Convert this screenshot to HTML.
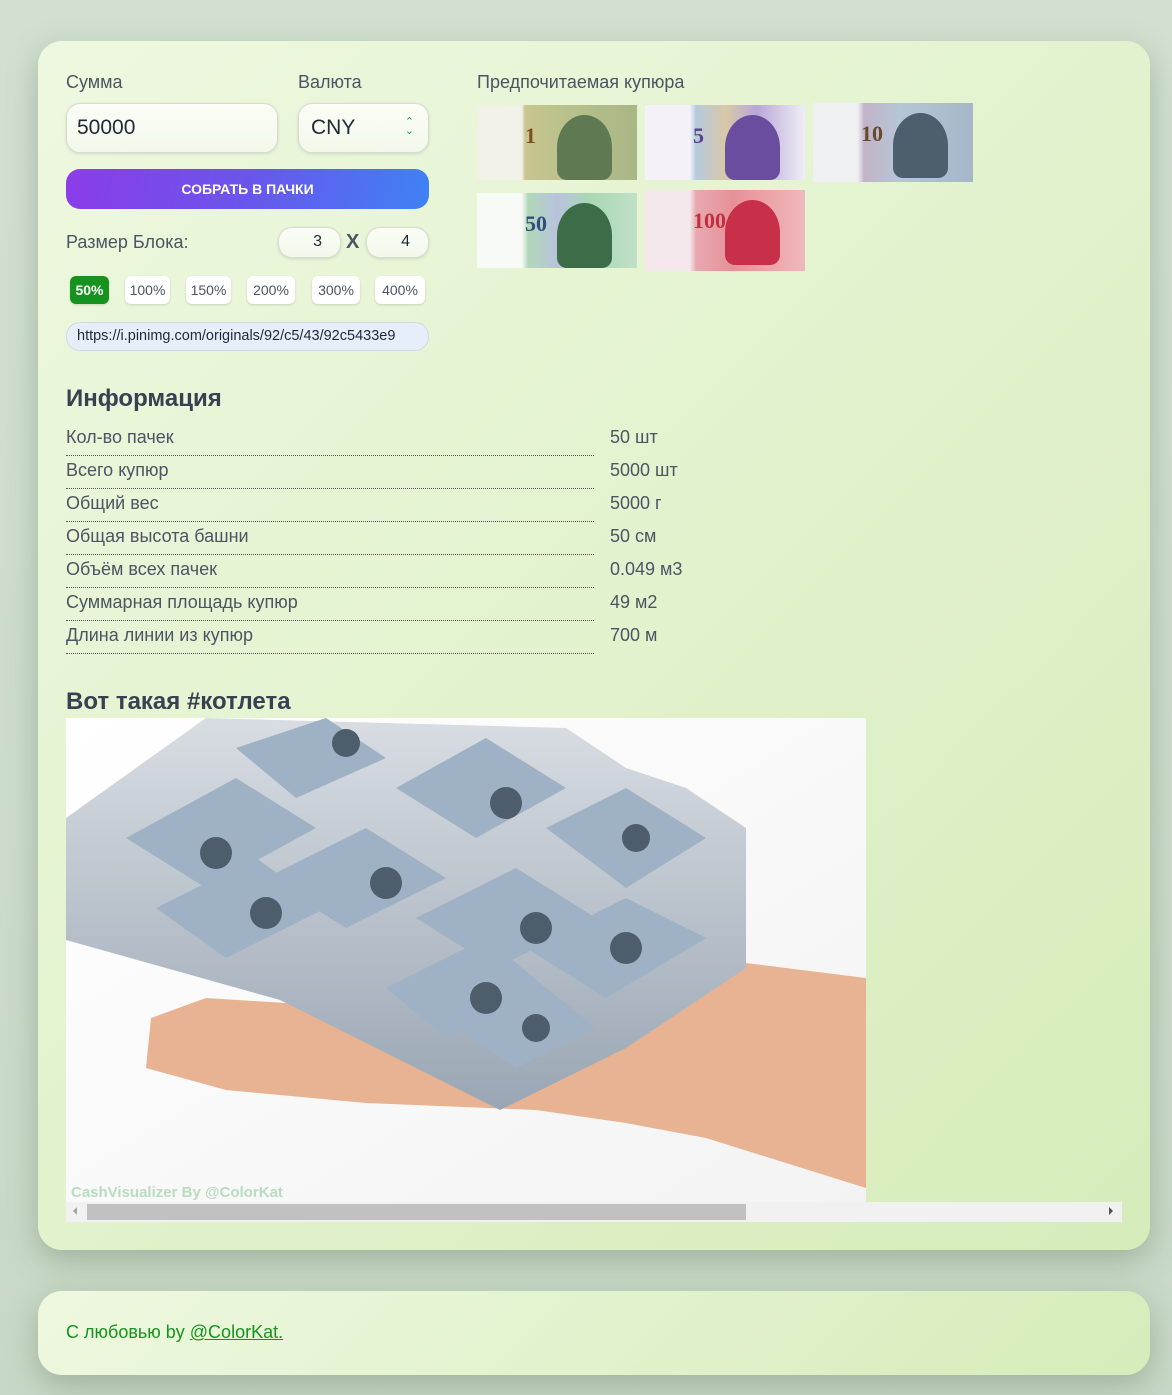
<!DOCTYPE html>
<html><head><meta charset="utf-8"><style>
*{box-sizing:border-box;margin:0;padding:0}
body{width:1172px;height:1395px;background:linear-gradient(180deg,#d2e0d0,#c8d8c6);font-family:"Liberation Sans",sans-serif;position:relative;overflow:hidden;color:#374151}
.card{position:absolute;left:38px;width:1112px;border-radius:24px;background:linear-gradient(135deg,#eef8e0,#d6ecba);box-shadow:0 10px 30px rgba(80,110,80,.35)}
.a{position:absolute}
.lbl{font-size:18px;color:#4b5563}
.inp{position:absolute;background:linear-gradient(#fbfdf6,#f2f8ea);border:1px solid #d6dccf;border-radius:14px;box-shadow:0 1px 3px rgba(0,0,0,.12);font-size:21px;color:#1f2937}
.pct{position:absolute;top:276px;height:28px;background:#fff;border-radius:6px;box-shadow:0 1px 2px rgba(0,0,0,.15);font-size:14px;color:#4b5563;text-align:center;line-height:28px}
.row{position:absolute;left:66px;width:528px;height:33px;border-bottom:1px dotted #555;font-size:18px;color:#4b5563;padding-top:4px}
.val{position:absolute;left:610px;font-size:18px;color:#4b5563}
.note{position:absolute;width:160px;height:75px;overflow:hidden}
.note .port{position:absolute;right:25px;top:10px;width:55px;height:65px;border-radius:50% 50% 10px 10px}
.note .num{position:absolute;left:48px;top:18px;font:bold 22px "Liberation Serif",serif}
</style></head><body>
<div class="card" style="top:41px;height:1209px"></div>
<div class="card" style="top:1291px;height:84px"></div>

<div class="a lbl" style="left:66px;top:72px">Сумма</div>
<div class="a lbl" style="left:298px;top:72px">Валюта</div>
<div class="inp" style="left:66px;top:103px;width:212px;height:50px;padding:12px 10px">50000</div>
<div class="inp" style="left:298px;top:103px;width:131px;height:50px;padding:12px 12px">CNY<span style="position:absolute;right:14px;top:14px;font-size:11px;color:#16a34a;line-height:9px">⌃<br>⌄</span></div>
<div class="a" style="left:66px;top:169px;width:363px;height:40px;border-radius:14px;background:linear-gradient(100deg,#8b3ce8,#6a55ec 50%,#3f82f4);color:#fff;font-weight:bold;font-size:14px;text-align:center;line-height:40px">СОБРАТЬ В ПАЧКИ</div>
<div class="a lbl" style="left:66px;top:232px">Размер Блока:</div>
<div class="inp" style="left:278px;top:227px;width:63px;height:31px;font-size:16px;text-align:right;padding:5px 18px">3</div>
<div class="a" style="left:346px;top:231px;font-size:20px;font-weight:bold;color:#4b5563">X</div>
<div class="inp" style="left:366px;top:227px;width:63px;height:31px;font-size:16px;text-align:right;padding:5px 18px">4</div>
<div class="pct" style="left:70px;width:39px;background:#16931f;color:#fff;font-weight:bold">50%</div>
<div class="pct" style="left:125px;width:45px">100%</div>
<div class="pct" style="left:186px;width:45px">150%</div>
<div class="pct" style="left:247px;width:48px">200%</div>
<div class="pct" style="left:312px;width:48px">300%</div>
<div class="pct" style="left:375px;width:50px">400%</div>
<div class="a" style="left:66px;top:322px;width:363px;height:29px;border-radius:14px;background:#e6eefb;border:1px solid #d0d8e6;font-size:14.5px;color:#1f2937;padding:5px 10px;white-space:nowrap;overflow:hidden">https://i.pinimg.com/originals/92/c5/43/92c5433e9</div>

<div class="a lbl" style="left:477px;top:72px">Предпочитаемая купюра</div>
<div class="note" style="left:477px;top:105px;background:linear-gradient(90deg,#f1f1ea 28%,#c9c690 30%,#b6c08a 60%,#a9b786)"><div class="port" style="background:#5f7a52"></div><div class="num" style="color:#7a5020">1</div></div>
<div class="note" style="left:645px;top:105px;background:linear-gradient(90deg,#f4f2f8 28%,#b4cadb 32%,#d8c8a8 50%,#b9a8d8 70%,#f0eef8)"><div class="port" style="background:#6a4d9e"></div><div class="num" style="color:#5e3f8c">5</div></div>
<div class="note" style="left:813px;top:103px;height:79px;background:linear-gradient(90deg,#eef0f2 28%,#c3b3c8 32%,#b5c7d6 55%,#a5b7c8)"><div class="port" style="background:#4d5e6c"></div><div class="num" style="color:#6a4a2a">10</div></div>
<div class="note" style="left:477px;top:193px;background:linear-gradient(90deg,#f8faf6 28%,#b0d8b8 32%,#b9c2de 50%,#a8d8b4 70%,#c0e0c8)"><div class="port" style="background:#3d6d48"></div><div class="num" style="color:#2f4f7a">50</div></div>
<div class="note" style="left:645px;top:190px;height:81px;background:linear-gradient(90deg,#f4e8ec 28%,#e8a8b0 32%,#e89098 55%,#f0b8bc)"><div class="port" style="background:#c8304a"></div><div class="num" style="color:#c03040">100</div></div>

<div class="a" style="left:66px;top:385px;font-size:24px;font-weight:bold;color:#374151">Информация</div>
<div class="row" style="top:423px">Кол-во пачек</div><div class="val" style="top:427px">50 шт</div>
<div class="row" style="top:456px">Всего купюр</div><div class="val" style="top:460px">5000 шт</div>
<div class="row" style="top:489px">Общий вес</div><div class="val" style="top:493px">5000 г</div>
<div class="row" style="top:522px">Общая высота башни</div><div class="val" style="top:526px">50 см</div>
<div class="row" style="top:555px">Объём всех пачек</div><div class="val" style="top:559px">0.049 м3</div>
<div class="row" style="top:588px">Суммарная площадь купюр</div><div class="val" style="top:592px">49 м2</div>
<div class="row" style="top:621px">Длина линии из купюр</div><div class="val" style="top:625px">700 м</div>

<div class="a" style="left:66px;top:688px;font-size:24px;font-weight:bold;color:#374151">Вот такая #котлета</div>
<svg class="a" style="left:66px;top:718px" width="800" height="484" viewBox="0 0 800 484">
<defs><linearGradient id="bg" x1="0" y1="0" x2="1" y2="1"><stop offset="0" stop-color="#fff"/><stop offset="1" stop-color="#f3f3f3"/></linearGradient>
<linearGradient id="side" x1="0" y1="0" x2="0" y2="1"><stop offset="0" stop-color="#d8dde2"/><stop offset="1" stop-color="#9aa6b4"/></linearGradient></defs>
<rect width="800" height="484" fill="url(#bg)"/>
<path d="M800 260 L800 470 L640 420 L560 405 L470 392 L300 385 L160 372 L80 350 L85 300 L140 280 L300 290 L540 270 L640 240 Z" fill="#e8b393"/>
<path d="M0 100 L140 0 L500 10 L560 50 L620 70 L680 110 L680 250 L560 330 L434 392 L330 340 L214 282 L100 250 L0 222 Z" fill="url(#side)"/>
<g fill="#9fb1c4"><path d="M60 120 L170 60 L250 110 L140 170Z"/><path d="M170 30 L260 0 L320 40 L230 80Z"/><path d="M330 70 L420 20 L500 70 L410 120Z"/><path d="M200 160 L300 110 L380 160 L280 210Z"/><path d="M350 200 L450 150 L530 200 L430 250Z"/><path d="M480 110 L560 70 L640 120 L560 170Z"/><path d="M90 190 L190 140 L260 190 L160 240Z"/><path d="M320 270 L420 220 L480 270 L380 320Z"/><path d="M460 230 L560 180 L640 220 L540 280Z"/><path d="M390 310 L480 270 L530 310 L450 350Z"/></g>
<g fill="#4e5d6b"><circle cx="150" cy="135" r="16"/><circle cx="280" cy="25" r="14"/><circle cx="440" cy="85" r="16"/><circle cx="320" cy="165" r="16"/><circle cx="470" cy="210" r="16"/><circle cx="570" cy="120" r="14"/><circle cx="200" cy="195" r="16"/><circle cx="420" cy="280" r="16"/><circle cx="560" cy="230" r="16"/><circle cx="470" cy="310" r="14"/></g>
<text x="5" y="479" font-family="Liberation Sans" font-weight="bold" font-size="15" fill="#b8dcc0">CashVisualizer By @ColorKat</text>
</svg>
<div class="a" style="left:66px;top:1202px;width:1056px;height:20px;background:#f1f1f1"></div>
<div class="a" style="left:87px;top:1204px;width:659px;height:16px;background:#c1c1c1"></div>
<div class="a" style="left:73px;top:1207px;width:0;height:0;border-top:4px solid transparent;border-bottom:4px solid transparent;border-right:4px solid #a3a3a3"></div>
<div class="a" style="left:1109px;top:1207px;width:0;height:0;border-top:4px solid transparent;border-bottom:4px solid transparent;border-left:4px solid #505050"></div>

<div class="a" style="left:66px;top:1322px;font-size:18px;color:#16931f">С любовью by <span style="text-decoration:underline">@ColorKat.</span></div>
</body></html>
